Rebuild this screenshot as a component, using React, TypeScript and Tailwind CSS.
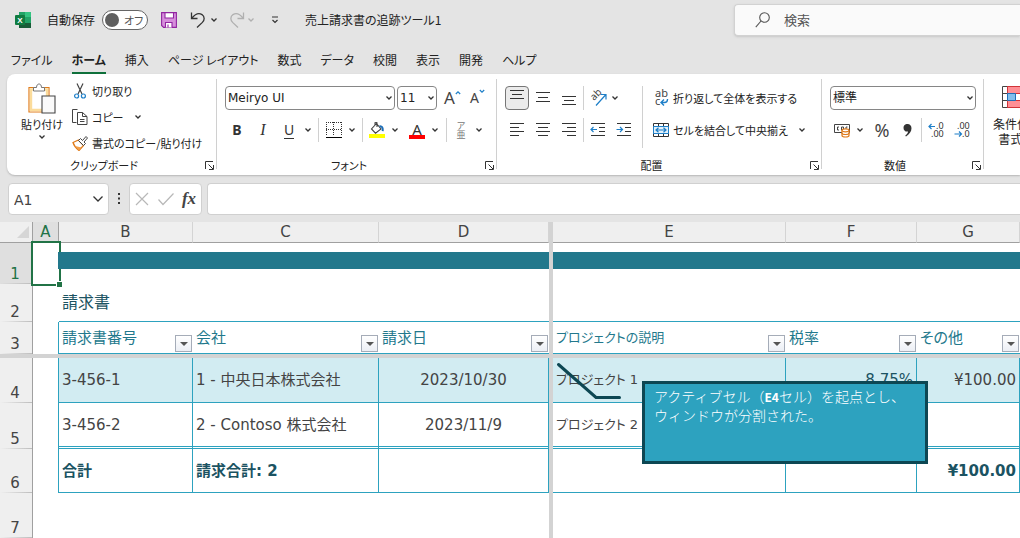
import type { ReactNode } from 'react';

const TABS = ['ファイル', 'ホーム', '挿入', 'ページ レイアウト', '数式', 'データ', '校閲', '表示', '開発', 'ヘルプ'];

function Chevron({ className = 'text-[#333]' }: { className?: string }) {
  return (
    <svg viewBox="0 0 8 8" className={`w-2 h-2 shrink-0 ${className}`} fill="none" stroke="currentColor" strokeWidth="1.3">
      <path d="M1.5 2.5 4 5l2.5-2.5" />
    </svg>
  );
}

function More({ label }: { label: string }) {
  return (
    <button aria-label={label} className="w-3 h-6 flex items-center justify-center">
      <Chevron />
    </button>
  );
}

function Tool({ label, wide, active, children }: { label: string; wide?: boolean; active?: boolean; children: ReactNode }) {
  return (
    <button
      aria-label={label}
      className={`${wide ? 'w-[26px]' : 'w-6'} h-6 shrink-0 flex items-center justify-center rounded ${active ? 'bg-[#ebebeb] border border-[#767676]' : ''}`}
    >
      {children}
    </button>
  );
}

function Combo({ label, value, className }: { label: string; value: string; className: string }) {
  return (
    <div className={`relative h-6 ${className}`}>
      <select aria-label={label} className="block appearance-none w-full h-full rounded border border-[#868686] bg-white pl-[2px] text-[12px] leading-4 text-[#222] font-['DejaVu_Sans','Noto_Sans_CJK_JP',sans-serif]">
        <option>{value}</option>
      </select>
      <span className="absolute right-[2px] inset-y-0 flex items-center pointer-events-none"><Chevron /></span>
    </div>
  );
}

function Rule({ className = 'h-6' }: { className?: string }) {
  return <span className={`w-px shrink-0 bg-[#d0d0d0] ${className}`} />;
}

function Group({ title, className, children }: { title: string; className: string; children: ReactNode }) {
  return (
    <section className={`relative shrink-0 flex flex-col ${className}`}>
      <div className="h-[80px]">{children}</div>
      <div className="h-[21px] pr-4 flex items-center justify-center text-[11px] leading-4">{title}</div>
      <button aria-label={`${title}の設定`} className="absolute right-[3px] bottom-[5px]">
        <svg viewBox="0 0 9 9" className="w-[9px] h-[9px]" fill="none" stroke="#333" strokeWidth="1">
          <path d="M.5 8V.5H8M3.5 3.5l4.5 4.5M8.5 4v4.5H4" />
        </svg>
      </button>
      <span className="absolute right-0 top-[5px] bottom-[6px] w-px bg-[#d0d0d0]" />
    </section>
  );
}

/* Horizontal bars, each given as [x1, x2, y] */
function Bars({ lines, children }: { lines: number[][]; children?: ReactNode }) {
  return (
    <svg viewBox="0 0 16 16" className="w-4 h-4" fill="none" stroke="#333" strokeWidth="1">
      {lines.map(([a, b, y]) => <path key={`${a}-${y}`} d={`M${a} ${y}H${b}`} />)}
      {children}
    </svg>
  );
}

function TitleBar() {
  return (
    <header className="h-[39px] flex items-center pl-[15px]">
      <svg viewBox="0 0 16 16" className="w-4 h-4 shrink-0">
        <path d="M4 0h6v5H4z" fill="#21a366" />
        <path d="M10 0h6v5h-6z" fill="#33c481" />
        <path d="M4 5h6v6H4z" fill="#107c41" />
        <path d="M10 5h6v6h-6z" fill="#21a366" />
        <path d="M4 11h12v5H4z" fill="#185c37" />
        <rect y="3" width="10" height="10" rx="1" fill="#107c41" />
        <text x="5" y="11" textAnchor="middle" fontFamily="Liberation Sans, sans-serif" fontWeight="bold" fontSize="8" fill="#fff">X</text>
      </svg>
      <label className="ml-4 flex items-center text-[12px] leading-4">
        自動保存
        <input type="checkbox" role="switch" className="sr-only" />
        <span className="ml-[7px] w-[46px] h-5 rounded-full border border-[#666] bg-white flex items-center pl-[2px] gap-[5px]">
          <span className="w-[14px] h-[14px] rounded-full bg-[#5f5f5f]" />
          <span className="text-[11px] text-[#555]">オフ</span>
        </span>
      </label>
      <button aria-label="上書き保存" className="ml-[13px]">
        <svg viewBox="0 0 16 16" className="w-4 h-4" fill="#d68fdc" stroke="#9126a0" strokeWidth="1.1">
          <path d="M.6.6h14.8v14.8H2.6L.6 13.4z" />
          <path d="M4 .6h8.500v5.400H4zM4.500 15.400v-4.900h6.500v4.900" fill="#fff" />
          <path d="M7 12.5v3" />
        </svg>
      </button>
      <button aria-label="元に戻す" className="ml-[13px] mr-[2px]">
        <svg viewBox="0 0 16 16" className="w-4 h-4" fill="none" stroke="#333" strokeWidth="1.3">
          <path d="M1.5.5v6h6M1.8 6.2C5 2.2 9 .6 12 2.6c3 2.2 2.6 5.6.4 7.8L7 15.5" />
        </svg>
      </button>
      <More label="元に戻す履歴" />
      <button aria-label="やり直し" className="ml-[9px]">
        <svg viewBox="0 0 16 16" className="w-4 h-4" fill="none" stroke="#b0b0b0" strokeWidth="1.3">
          <path d="M14.5.5v6h-6M14.2 6.2C11 2.2 7 .6 4 2.6 1 4.8 1.400 8.200 3.600 10.400L9 15.500" />
        </svg>
      </button>
      <button aria-label="やり直し履歴" className="w-3 flex justify-center"><Chevron className="text-[#b0b0b0]" /></button>
      <button aria-label="クイック アクセスのカスタマイズ" className="ml-3 w-3 flex justify-center">
        <svg viewBox="0 0 8 8" className="w-2 h-2" fill="none" stroke="#333" strokeWidth="1.2">
          <path d="M1 1h6M1.500 4 4 6.500 6.500 4" />
        </svg>
      </button>
      <h1 className="ml-6 w-[429px] shrink-0 text-[12px] leading-4">売上請求書の追跡ツール1</h1>
      <div className="flex-1 h-8 flex items-center gap-[13px] pl-[20px] rounded-l bg-[#fafafa] border border-r-0 border-[#d2d2d2] shadow-sm">
        <svg viewBox="0 0 16 16" className="w-4 h-4 shrink-0" fill="none" stroke="#555" strokeWidth="1.100">
          <circle cx="9.500" cy="5.500" r="4.800" />
          <path d="M6 9 .8 15.200" />
        </svg>
        <input type="search" aria-label="検索" placeholder="検索" className="w-full text-[13px] leading-5 outline-none placeholder:text-[#555]" />
      </div>
    </header>
  );
}

function Tabs() {
  return (
    <nav className="h-[35px] flex items-center gap-[19px] pl-[11px] pt-2 text-[12px] leading-5">
      {TABS.map((t) => (
        <button key={t} className={`h-[26px] shrink-0 ${t === 'ホーム' ? 'font-bold border-b-2 border-[#0f703b]' : 'border-b-2 border-transparent'}`}>
          {t}
        </button>
      ))}
    </nav>
  );
}

function Clipboard() {
  return (
    <Group title="クリップボード" className="w-[210px]">
      <div className="flex pl-[14px] pt-[4px]">
        <button className="w-[42px] mt-[5px] flex flex-col items-center text-[11px] leading-4 whitespace-nowrap">
          <svg viewBox="0 0 28 31" className="w-7 h-[31px] mb-[2px]" fill="none">
            <path d="M1 4.500h20V29H1z" fill="#fff" stroke="#e07b1a" strokeWidth="1.200" />
            <path d="M3 6.500h16V27H3z" fill="#fff" stroke="#fbdc9b" strokeWidth="2.400" />
            <path d="M5.500 8V4.500h3C8.500-.2 13.500-.2 13.500 4.500h3V8z" fill="#fff" stroke="#777" />
            <path d="M14 13h13v17H14z" fill="#fafafa" stroke="#444" strokeWidth="1.100" />
          </svg>
          貼り付け
          <span className="mt-px"><Chevron /></span>
        </button>
        <div className="ml-[9px] flex flex-col text-[11px] leading-4 whitespace-nowrap">
          <button className="h-[26px] flex items-center gap-1">
            <svg viewBox="0 0 16 16" className="w-4 h-4" fill="none" stroke="#444" strokeWidth="1.200">
              <path d="M5 .5 10 11M11 .5 6 11" />
              <circle cx="4.600" cy="13" r="2" stroke="#1e7fc8" />
              <circle cx="11.400" cy="13" r="2" stroke="#1e7fc8" />
            </svg>
            切り取り
          </button>
          <div className="h-[26px] flex items-center">
            <button className="flex items-center gap-1">
              <svg viewBox="0 0 16 16" className="w-4 h-4" fill="none" stroke="#444">
                <path d="M4.500 13.500h-4V.5h5" />
                <path d="M5.500 3.500h5l4.500 4v8H5.500zM10.500 3.500v4H15M8 10.500h4.500M8 12.500h4.500" />
              </svg>
              コピー
            </button>
            <span className="ml-2"><More label="コピーのオプション" /></span>
          </div>
          <button className="h-[26px] flex items-center gap-1">
            <svg viewBox="0 0 16 16" className="w-4 h-4" fill="none">
              <path d="M1 7.500 6.500 5l5 5.500L7 15.500C4.500 13.500 2 11 1 7.500z" fill="#fff" stroke="#e07b1a" strokeWidth="1.300" />
              <path d="m3 11 6.500 1.500L7 15.200z" fill="#f3a04a" />
              <path d="m6.500 5.500 2-2 2 2 3.500-4 1.500 1.500-3.500 4 1.500 1.500-2 2z" fill="#fff" stroke="#444" />
            </svg>
            書式のコピー/貼り付け
          </button>
        </div>
      </div>
    </Group>
  );
}

function FontGroup() {
  return (
    <Group title="フォント" className="w-[280px]">
      <div className="pl-2 pt-3 flex flex-col gap-2">
        <div className="flex items-center">
          <Combo label="フォント名" value="Meiryo UI" className="w-[170px]" />
          <Combo label="フォント サイズ" value="11" className="w-10 ml-[2px]" />
          <button aria-label="フォント サイズの拡大" className="ml-[7px] w-[26px] flex items-start text-[17px] leading-5 text-[#444] font-['Noto_Sans',sans-serif]">
            A
            <svg viewBox="0 0 6 6" className="w-[6px] h-[6px] mt-[2px]" fill="none" stroke="#1e7fc8" strokeWidth="1.200"><path d="M.8 4 3 1.800 5.200 4" /></svg>
          </button>
          <button aria-label="フォント サイズの縮小" className="w-[26px] flex items-start text-[14px] leading-5 text-[#444] font-['Noto_Sans',sans-serif]">
            A
            <svg viewBox="0 0 6 6" className="w-[6px] h-[6px]" fill="none" stroke="#1e7fc8" strokeWidth="1.200"><path d="M.8 2 3 4.200 5.200 2" /></svg>
          </button>
        </div>
        <div className="-ml-px flex items-center text-[14px] leading-5 text-[#333]">
          <Tool label="太字" wide><span className="font-bold font-['Noto_Sans',sans-serif]">B</span></Tool>
          <Tool label="斜体" wide><span className="italic font-['Liberation_Serif',serif] text-[16px]">I</span></Tool>
          <Tool label="下線" wide><span className="border-b border-[#333] leading-4 font-['Noto_Sans',sans-serif]">U</span></Tool>
          <More label="下線の種類" />
          <Rule className="h-6 ml-1 mr-[3px]" />
          <Tool label="罫線">
            <svg viewBox="0 0 16 16" className="w-4 h-4" fill="none" stroke="#333">
              <path d="M0 .5h16M0 7.500h16M.5 0v14M7.500 0v14M15.500 0v14" strokeDasharray="1 1" />
              <path d="M0 15.500h16" stroke="#000" />
            </svg>
          </Tool>
          <More label="罫線の種類" />
          <Rule className="h-6 ml-1 mr-[2px]" />
          <Tool label="塗りつぶしの色">
            <svg viewBox="0 0 16 16" className="w-4 h-4" fill="none">
              <path d="M7.500 1.500 12 7l-5.500 4.200L2.500 7zM6 4V1.200c0-1.400 2-1.400 2 0V5" stroke="#444" strokeWidth="1.100" />
              <path d="M10.500 4.200c2.600-.4 3.600 1.500 3.200 5" stroke="#1e6fb8" strokeWidth="2" />
              <path d="M0 12h16v4H0z" fill="#ff0" />
            </svg>
          </Tool>
          <More label="塗りつぶしの色の一覧" />
          <span className="w-1" />
          <Tool label="フォントの色">
            <span className="w-4 h-[17px] text-center leading-[14px] border-b-4 border-[#f00] text-[15px] font-['Noto_Sans',sans-serif] flex justify-center">A</span>
          </Tool>
          <More label="フォントの色の一覧" />
          <Rule className="h-6 ml-[5px] mr-[2px]" />
          <Tool label="ふりがな"><span className="w-[9px] break-all text-[9px] leading-[9px] text-[#777] [font-feature-settings:normal]">ア亜</span></Tool>
          <More label="ふりがなの設定" />
        </div>
      </div>
    </Group>
  );
}

function Alignment() {
  return (
    <Group title="配置" className="w-[325px]">
      <div className="pl-2 pt-3 flex text-[11px] leading-4 whitespace-nowrap">
        <div className="flex flex-col gap-2">
          <div className="flex items-center gap-[2px]">
            <Tool label="上揃え" active><Bars lines={[[1, 15, 0.5], [3, 13, 4.5], [1, 15, 8.5]]} /></Tool>
            <Tool label="上下中央揃え"><Bars lines={[[1, 15, 2.5], [3, 13, 7.5], [1, 15, 11.5]]} /></Tool>
            <Tool label="下揃え"><Bars lines={[[1, 15, 6.5], [3, 13, 10.5], [1, 15, 14.5]]} /></Tool>
            <Rule />
            <Tool label="方向">
              <svg viewBox="0 0 16 16" className="w-4 h-4 overflow-visible" fill="none">
                <text x="4" y="11" transform="rotate(-45 4 11)" fontFamily="Noto Sans, sans-serif" fontSize="10" fill="#444">ab</text>
                <path d="M6 15.500 15.500 5M11 4.500h5v5" stroke="#1e7fc8" strokeWidth="1.200" />
              </svg>
            </Tool>
            <span className="-ml-[3px]"><More label="方向のオプション" /></span>
          </div>
          <div className="flex items-center gap-[2px]">
            <Tool label="左揃え"><Bars lines={[[1, 15, 1.5], [1, 10, 5.5], [1, 15, 9.5], [1, 10, 13.5]]} /></Tool>
            <Tool label="中央揃え"><Bars lines={[[1, 15, 1.5], [3, 13, 5.5], [1, 15, 9.5], [3, 13, 13.5]]} /></Tool>
            <Tool label="右揃え"><Bars lines={[[1, 15, 1.5], [6, 15, 5.5], [1, 15, 9.5], [6, 15, 13.5]]} /></Tool>
            <Rule />
            <Tool label="インデントを減らす">
              <Bars lines={[[1, 15, 1.5], [9, 15, 5.5], [9, 15, 9.5], [1, 15, 13.5]]}>
                <path d="M7 7.500H1M3.500 5 1 7.500 3.500 10" stroke="#1e7fc8" strokeWidth="1.200" />
              </Bars>
            </Tool>
            <Tool label="インデントを増やす">
              <Bars lines={[[1, 15, 1.5], [9, 15, 5.5], [9, 15, 9.5], [1, 15, 13.5]]}>
                <path d="M.5 7.500h6M4 5l2.500 2.500L4 10" stroke="#1e7fc8" strokeWidth="1.200" />
              </Bars>
            </Tool>
          </div>
        </div>
        <Rule className="h-[62px] ml-[6px] mr-[10px]" />
        <div className="flex flex-col gap-2">
          <button className="h-6 flex items-center gap-1">
            <svg viewBox="0 0 16 16" className="w-4 h-4 overflow-visible" fill="none">
              <text fontFamily="Noto Sans, sans-serif" fontSize="11" fill="#444">
                <tspan x="2" y="7">ab</tspan>
                <tspan x="2" y="15">c</tspan>
              </text>
              <path d="M14.500 9v.5c0 2-1 3-3 3H8.500M11 9.500l-3 3 3 3" stroke="#1e7fc8" strokeWidth="1.400" />
            </svg>
            折り返して全体を表示する
          </button>
          <div className="flex items-center">
            <button className="h-6 flex items-center gap-1">
              <svg viewBox="0 0 16 16" className="w-4 h-4" fill="none" stroke="#333">
                <path d="M.5 1.500h15v13H.5zM5.500 1.500v3M10.500 1.500v3M5.500 11.500v3M10.500 11.500v3" />
                <path d="M.5 4.500h15v7H.5z" fill="#e3f1fb" stroke="#1e7fc8" />
                <path d="M3 8h10M5.500 5.800 3 8l2.500 2.200M10.500 5.800 13 8l-2.500 2.200" stroke="#1e7fc8" strokeWidth="1.200" />
              </svg>
              セルを結合して中央揃え
            </button>
            <span className="ml-2"><More label="セル結合のオプション" /></span>
          </div>
        </div>
      </div>
    </Group>
  );
}

function NumberGroup() {
  return (
    <Group title="数値" className="w-[162px]">
      <div className="pl-2 pt-3 flex flex-col gap-2">
        <Combo label="表示形式" value="標準" className="w-[146px]" />
        <div className="flex items-center text-[#444]">
          <Tool label="通貨表示形式">
            <svg viewBox="0 0 16 16" className="w-4 h-4" fill="none">
              <path d="M.5 2.500h15v8H.5z" stroke="#444" />
              <path d="M5 5H3.500v3H5M7.500 8V5h2v3M12 8V5h1.500" stroke="#444" />
              <path d="M8 8.500v5c0 2 7 2 7 0v-5z" fill="#fff" stroke="#e07b1a" strokeWidth="1.200" />
              <ellipse cx="11.500" cy="8.300" rx="3.500" ry="1.500" fill="#fff" stroke="#e07b1a" strokeWidth="1.200" />
              <path d="M8 11c0 2 7 2 7 0" stroke="#e07b1a" strokeWidth="1.200" />
            </svg>
          </Tool>
          <More label="通貨の一覧" />
          <span className="w-1" />
          <Tool label="パーセント スタイル"><span className="text-[18px] leading-6 font-['Noto_Sans',sans-serif]">%</span></Tool>
          <Tool label="桁区切りスタイル" wide>
            <svg viewBox="0 0 16 16" className="w-4 h-4"><path d="M7.500 2c3-.5 5 1.200 5 4.200 0 3.300-2.200 6.100-5.500 8.300l-.8-.8c2-1.700 2.800-3 2.800-4.200C6.500 10 4.500 8.500 4.500 5.700 4.500 3.800 5.800 2.300 7.500 2z" fill="#333" /></svg>
          </Tool>
          <Rule className="h-6 mx-px" />
          <Tool label="小数点以下の表示桁数を増やす" wide>
            <svg viewBox="0 0 16 16" className="w-4 h-4 overflow-visible" fill="none">
              <text fontFamily="Noto Sans, sans-serif" fontSize="9" fill="#333">
                <tspan x="8" y="7">.0</tspan>
                <tspan x="3" y="15">.00</tspan>
              </text>
              <path d="M7 4.500H1M3.500 2 1 4.500 3.500 7" stroke="#1e7fc8" strokeWidth="1.200" />
            </svg>
          </Tool>
          <Tool label="小数点以下の表示桁数を減らす" wide>
            <svg viewBox="0 0 16 16" className="w-4 h-4 overflow-visible" fill="none">
              <text fontFamily="Noto Sans, sans-serif" fontSize="9" fill="#333">
                <tspan x="3" y="7">.00</tspan>
                <tspan x="8" y="15">.0</tspan>
              </text>
              <path d="M.5 12h7M5 9.500 7.500 12 5 14.500" stroke="#1e7fc8" strokeWidth="1.200" />
            </svg>
          </Tool>
        </div>
      </div>
    </Group>
  );
}

function Ribbon() {
  return (
    <div className="ml-[7px] h-[101px] flex overflow-hidden rounded-l-lg bg-white shadow-[0_1px_2px_#b5b5b5]">
      <Clipboard />
      <FontGroup />
      <Alignment />
      <NumberGroup />
      <button className="ml-[9px] pt-3 shrink-0 flex flex-col items-center text-[12px] leading-[15px]">
        <svg viewBox="0 0 28 22" className="w-7 h-[22px] mb-2" fill="none">
          <path d="M.5.5h27v21H.5z" fill="#fff" stroke="#444" />
          <path d="M.5 7.500h27M.5 14.500h27" stroke="#444" />
          <path d="M5.500.5h17v7h-17zM5.500 14.500h17v7h-17z" fill="#ff8f95" stroke="#d13438" />
          <path d="M5.500 7.500h8v7h-8z" fill="#83beec" stroke="#1e6fb8" />
        </svg>
        <span>条件付き</span>
        <span className="flex items-center gap-1">書式 <Chevron /></span>
      </button>
    </div>
  );
}

function FormulaBar() {
  return (
    <div className="h-[47px] pt-2 flex items-start pl-2">
      <div className="w-[101px] h-8 shrink-0 flex items-center rounded border border-[#d0d0d0] bg-white pl-[5px] pr-1">
        <input aria-label="名前ボックス" defaultValue="A1" className="w-full min-w-0 pt-[2px] text-[14px] leading-5 text-[#444] outline-none font-['DejaVu_Sans',sans-serif]" />
        <button aria-label="名前の一覧">
          <svg viewBox="0 0 12 12" className="w-3 h-3" fill="none" stroke="#333" strokeWidth="1.300"><path d="m1.500 3.500 4.500 4.500 4.500-4.500" /></svg>
        </button>
      </div>
      <svg viewBox="0 0 4 12" className="w-1 h-8 mx-2 shrink-0" fill="#333"><path d="M1 0h2v2H1zM1 4.500h2v2H1zM1 9h2v2H1z" /></svg>
      <div className="w-[73px] h-8 shrink-0 flex items-center justify-between rounded border border-[#d0d0d0] bg-white px-1">
        <button aria-label="キャンセル">
          <svg viewBox="0 0 16 16" className="w-4 h-4" fill="none" stroke="#b8b8b8" strokeWidth="1.200"><path d="m2 2 12 12M14 2 2 14" /></svg>
        </button>
        <button aria-label="入力">
          <svg viewBox="0 0 16 16" className="w-4 h-4" fill="none" stroke="#b8b8b8" strokeWidth="1.200"><path d="m.5 8.500 4.500 5L15.500 2.500" /></svg>
        </button>
        <button aria-label="関数の挿入" className="w-4 text-[17px] leading-6 italic font-bold text-[#444] font-['Liberation_Serif',serif]">fx</button>
      </div>
      <input aria-label="数式バー" className="ml-[5px] flex-1 min-w-0 h-8 rounded-l border border-r-0 border-[#d0d0d0] bg-white px-2 text-[14px] outline-none" />
    </div>
  );
}

function RowHead({ n, active }: { n: number; active?: boolean }) {
  return (
    <th
      scope="row"
      className={`p-0 align-bottom text-center font-normal leading-5 pr-[2px] border-r border-[#a0a0a0] bg-[linear-gradient(to_right,transparent,#bdbdbd)] bg-[length:100%_1px] bg-bottom bg-no-repeat ${active ? 'bg-[#dfdfdf] text-[#217346]' : 'bg-[#efefef] text-[#444]'}`}
    >
      {n}
    </th>
  );
}

function ColHead({ name, active }: { name: string; active?: boolean }) {
  return (
    <th
      scope="col"
      className={`p-0 font-normal leading-5 border-b border-r border-b-[#a0a0a0] ${active ? 'bg-[#dfdfdf] text-[#217346] border-r-[#a0a0a0]' : 'bg-[#efefef] text-[#444] border-r-[#d4d4d4]'}`}
    >
      {name}
    </th>
  );
}

function FilterHead({ name, small }: { name: string; small?: boolean }) {
  return (
    <td className="p-0 border-b border-[#2da2bf] text-[#22788c]">
      <div className="h-[31px] flex items-center justify-between pl-[3px] pr-px">
        <span className={`leading-5 whitespace-nowrap ${small ? 'text-[13px]' : ''}`}>{name}</span>
        <button aria-label={`${name}のフィルター`} className="self-end mb-px w-[17px] h-[17px] shrink-0 flex items-center justify-center border border-[#a5acb8] bg-linear-to-b from-white to-[#eceff5]">
          <svg viewBox="0 0 8 4" className="w-2 h-1"><path d="M0 0h8L4 4z" fill="#555" /></svg>
        </button>
      </div>
    </td>
  );
}

function Split() {
  return <td className="p-0 bg-[#d3d3d3]" />;
}

const CELL = 'p-0 px-[3px] leading-5 whitespace-nowrap border-b border-r border-[#2da2bf]';
const TOTAL = `${CELL} font-bold text-[#1b5362]`;

function Sheet() {
  return (
    <main className="relative overflow-hidden bg-white">
      <table className="w-full table-fixed border-separate border-spacing-0 text-[15px] font-['DejaVu_Sans','Noto_Sans_CJK_JP',sans-serif] text-[#444]">
        <colgroup>
          <col className="w-[33px]" />
          <col className="w-[26px]" />
          <col className="w-[134px]" />
          <col className="w-[186px]" />
          <col className="w-[170px]" />
          <col className="w-1" />
          <col className="w-[233px]" />
          <col className="w-[131px]" />
          <col />
        </colgroup>
        <thead>
          <tr className="h-[21px]">
            <td className="p-0 border-b border-r border-[#a0a0a0] bg-[#efefef]">
              <svg viewBox="0 0 12 12" className="w-3 h-3 ml-auto mr-[3px]"><path d="M12 0v12H0z" fill="#d6d6d6" /></svg>
            </td>
            <ColHead name="A" active />
            <ColHead name="B" />
            <ColHead name="C" />
            <ColHead name="D" />
            <Split />
            <ColHead name="E" />
            <ColHead name="F" />
            <ColHead name="G" />
          </tr>
        </thead>
        <tbody>
          <tr className="h-[41px]">
            <RowHead n={1} active />
            <td className="relative p-0">
              <div className="absolute -inset-[2px] border-2 border-[#217346]" />
              <div className="absolute -right-[4px] -bottom-[4px] z-20 w-[7px] h-[7px] border border-white bg-[#217346]" />
            </td>
            <td colSpan={3} className="p-0 align-top"><div className="relative z-10 -ml-px mt-[9px] h-[17px] bg-[#22788c]" /></td>
            <Split />
            <td colSpan={3} className="p-0 align-top"><div className="mt-[9px] h-[17px] bg-[#22788c]" /></td>
          </tr>
          <tr className="h-[38px]">
            <RowHead n={2} />
            <td />
            <td colSpan={3} className="p-0 pl-[3px] border-b border-[#2da2bf] text-[16px] leading-5 text-[#1b5362]">請求書</td>
            <Split />
            <td colSpan={3} className="p-0 border-b border-[#2da2bf]" />
          </tr>
          <tr className="h-8">
            <RowHead n={3} />
            <td className="p-0 border-r border-[#2da2bf]" />
            <FilterHead name="請求書番号" />
            <FilterHead name="会社" />
            <FilterHead name="請求日" />
            <Split />
            <FilterHead name="プロジェクトの説明" small />
            <FilterHead name="税率" />
            <FilterHead name="その他" />
          </tr>
          <tr className="h-1"><td colSpan={9} className="p-0 bg-[#d3d3d3]" /></tr>
          <tr className="h-[45px] *:nth-[n+3]:bg-[#d2ecf2]">
            <RowHead n={4} />
            <td className="p-0 border-r border-[#2da2bf]" />
            <td className={CELL}>3-456-1</td>
            <td className={CELL}>1 - 中央日本株式会社</td>
            <td className={`${CELL} text-center`}>2023/10/30</td>
            <td className="p-0 bg-[#d3d3d3]!" />
            <td className={`${CELL} text-[13px]`}>プロジェクト 1</td>
            <td className={`${CELL} text-right text-[#1b5362]`}>8.75%</td>
            <td className={`${CELL} text-right`}>¥100.00</td>
          </tr>
          <tr className="h-[46px] *:nth-[n+3]:border-b-3 *:nth-[n+3]:border-b-[#2da2bf] *:nth-[n+3]:[border-bottom-style:double]">
            <RowHead n={5} />
            <td className="p-0 border-r border-[#2da2bf]" />
            <td className={CELL}>3-456-2</td>
            <td className={CELL}>2 - Contoso 株式会社</td>
            <td className={`${CELL} text-center`}>2023/11/9</td>
            <td className="p-0 bg-[#d3d3d3] border-b-0!" />
            <td className={`${CELL} text-[13px]`}>プロジェクト 2</td>
            <td className={CELL} />
            <td className={CELL} />
          </tr>
          <tr className="h-[44px]">
            <RowHead n={6} />
            <td className="p-0 border-r border-[#2da2bf]" />
            <td className={TOTAL}>合計</td>
            <td className={TOTAL}>請求合計: 2</td>
            <td className={TOTAL} />
            <Split />
            <td className={TOTAL} />
            <td className={TOTAL} />
            <td className={`${TOTAL} text-right`}>¥100.00</td>
          </tr>
          <tr className="h-[45px]">
            <RowHead n={7} />
            <td colSpan={4} />
            <Split />
            <td colSpan={3} />
          </tr>
        </tbody>
      </table>

      {/* Callout floating over the lower right pane */}
      <svg viewBox="0 0 66 38" className="absolute left-[556px] top-[140px] w-[66px] h-[38px]" fill="none" stroke="#0d4753" strokeWidth="3" strokeLinecap="round">
        <path d="M2.500 2.500 40 35.500h23.500" />
      </svg>
      <div className="absolute left-[642px] top-[159px] w-[286px] h-[83px] border-3 border-[#0d4753] bg-[#2da2bf] pl-[9px] pt-[3px] text-[14px] leading-[19px] text-white whitespace-nowrap font-['Noto_Sans_CJK_JP',sans-serif] font-light [font-feature-settings:normal]">
        アクティブセル（<b className="text-[12px] font-bold">E4</b>セル）を起点とし、<br />
        ウィンドウが分割された。
      </div>
    </main>
  );
}

export default function App() {
  return (
    <div className="min-h-screen overflow-hidden bg-[#e4e4e4] text-[#222] font-['Noto_Sans_CJK_JP',sans-serif] [font-feature-settings:'palt']">
      <TitleBar />
      <Tabs />
      <Ribbon />
      <FormulaBar />
      <Sheet />
    </div>
  );
}
